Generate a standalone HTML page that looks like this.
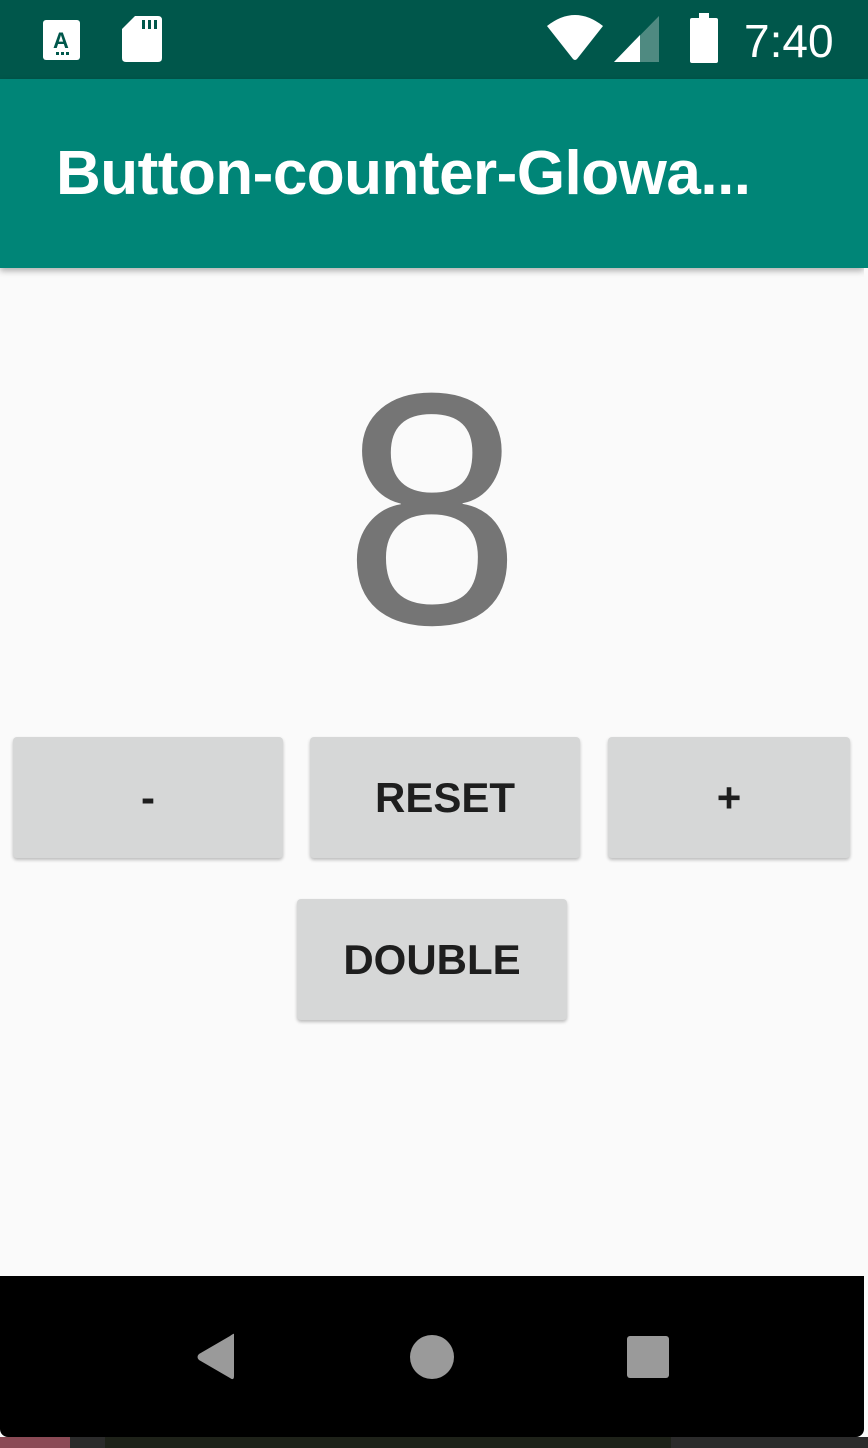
<!DOCTYPE html>
<html><head><meta charset="utf-8"><style>
*{margin:0;padding:0;box-sizing:border-box}
body{width:868px;height:1448px;overflow:hidden;background:#fafafa;font-family:"Liberation Sans",sans-serif;position:relative}
.screen{position:absolute;left:0;top:0;width:864px;height:1437px;background:#fafafa;overflow:hidden;border-radius:0 0 8px 8px}
.status{position:absolute;left:0;top:0;width:864px;height:79px;background:#00574b}
.bar{position:absolute;left:0;top:79px;width:864px;height:189px;background:#008577;box-shadow:0 3px 6px rgba(0,0,0,.3)}
.title{position:absolute;left:56px;top:138px;color:#fff;font-size:62px;font-weight:bold;letter-spacing:-0.5px}
.num{position:absolute;left:0;width:864px;top:344px;text-align:center;color:#757575;font-size:330px;line-height:1;transform:scaleX(0.97)}
.btn{position:absolute;background:#d6d7d7;border-radius:4px;box-shadow:0 2px 3px rgba(0,0,0,.25);color:#1e1e1e;font-weight:bold;font-size:42px;display:flex;align-items:center;justify-content:center}
.nav{position:absolute;left:0;top:1276px;width:864px;height:161px;background:#000}
.time{position:absolute;left:744px;top:14px;color:#fff;font-size:46px}
</style></head><body>
<div style="position:absolute;left:0;top:0;width:868px;height:79px;background:#00574b"></div>
<div style="position:absolute;left:864px;top:79px;width:4px;height:189px;background:#008577"></div>
<div style="position:absolute;left:0;top:1437px;width:868px;height:11px;background:#2b2b2b"></div>
<div style="position:absolute;left:0;top:1437px;width:70px;height:11px;background:#8a4a55"></div>
<div style="position:absolute;left:105px;top:1437px;width:566px;height:11px;background:#1e2219"></div>
<div class="screen">
<div class="status">
<svg width="868" height="79" style="position:absolute;left:0;top:0">
<rect x="43" y="20" width="37" height="40" rx="3" fill="#fff"/>
<text x="61" y="48" font-family="Liberation Sans" font-weight="bold" font-size="22" fill="#00574b" text-anchor="middle">A</text>
<rect x="56" y="52" width="3" height="3" fill="#00574b"/><rect x="61" y="52" width="3" height="3" fill="#00574b"/><rect x="66" y="52" width="3" height="3" fill="#00574b"/>
<path d="M135 16 H158 Q162 16 162 20 V58 Q162 62 158 62 H126 Q122 62 122 58 V29 Z" fill="#fff"/>
<rect x="142" y="20" width="3" height="9" fill="#00574b"/><rect x="148" y="20" width="3" height="9" fill="#00574b"/><rect x="154" y="20" width="3" height="9" fill="#00574b"/>
<path d="M547 26 Q575 4 603 26 L577 59 Q575 61 573 59 Z" fill="#fff"/>
<path d="M614 62 L659 16 V62 Z" fill="#4f8a81"/>
<path d="M614 62 L640 35 V62 Z" fill="#fff"/>
<rect x="699" y="13" width="10" height="6" fill="#fff"/>
<rect x="690" y="18" width="28" height="45" rx="2" fill="#fff"/>
</svg>
<div class="time">7:40</div>
</div>
<div class="bar"><div class="title" style="top:59px">Button-counter-Glowa...</div></div>
<div class="num">8</div>
<div class="btn" style="left:13px;top:737px;width:270px;height:121px">-</div>
<div class="btn" style="left:310px;top:737px;width:270px;height:121px">RESET</div>
<div class="btn" style="left:608px;top:737px;width:242px;height:121px">+</div>
<div class="btn" style="left:297px;top:899px;width:270px;height:121px">DOUBLE</div>
<div class="nav">
<svg width="864" height="161">
<path d="M234 58 V100 Q234 105 230 102 L199 84 Q196 81 199 78 L230 60 Q234 57 234 58 Z" fill="#9a9a9a"/>
<ellipse cx="432" cy="81" rx="22" ry="22" fill="#9a9a9a"/>
<rect x="627" y="60" width="42" height="42" rx="3" fill="#9a9a9a"/>
</svg>
</div>
</div>
</body></html>
